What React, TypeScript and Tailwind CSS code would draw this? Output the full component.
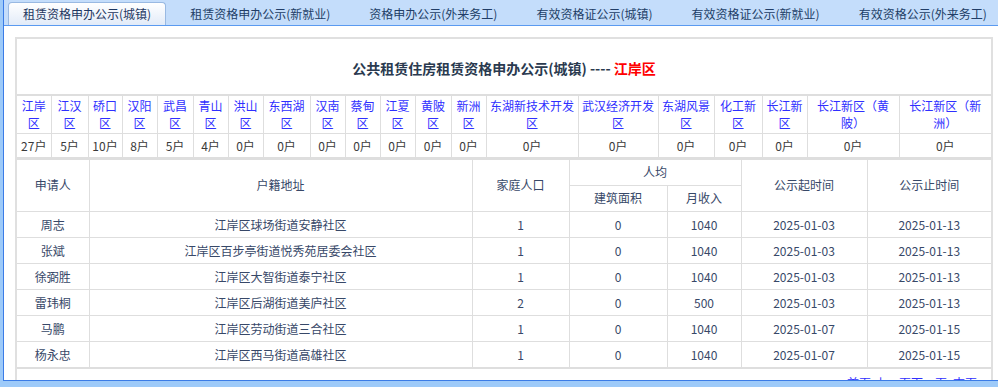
import React from "react";

const districts: [string, string][] = [
  ["江岸区", "27户"],
  ["江汉区", "5户"],
  ["硚口区", "10户"],
  ["汉阳区", "8户"],
  ["武昌区", "5户"],
  ["青山区", "4户"],
  ["洪山区", "0户"],
  ["东西湖区", "0户"],
  ["汉南区", "0户"],
  ["蔡甸区", "0户"],
  ["江夏区", "0户"],
  ["黄陂区", "0户"],
  ["新洲区", "0户"],
  ["东湖新技术开发区", "0户"],
  ["武汉经济开发区", "0户"],
  ["东湖风景区", "0户"],
  ["化工新区", "0户"],
  ["长江新区", "0户"],
  ["长江新区（黄陂）", "0户"],
  ["长江新区（新洲）", "0户"],
];
const dWidths = [34, 37, 34, 35, 36, 35, 35, 47, 35, 35, 35, 36, 35, 92, 80, 56, 48, 45, 92, 92];

const rows: string[][] = [
  ["周志", "江岸区球场街道安静社区", "1", "0", "1040", "2025-01-03", "2025-01-13"],
  ["张斌", "江岸区百步亭街道悦秀苑居委会社区", "1", "0", "1040", "2025-01-03", "2025-01-13"],
  ["徐弼胜", "江岸区大智街道泰宁社区", "1", "0", "1040", "2025-01-03", "2025-01-13"],
  ["雷玮桐", "江岸区后湖街道美庐社区", "2", "0", "500", "2025-01-03", "2025-01-13"],
  ["马鹏", "江岸区劳动街道三合社区", "1", "0", "1040", "2025-01-07", "2025-01-15"],
  ["杨永忠", "江岸区西马街道高雄社区", "1", "0", "1040", "2025-01-07", "2025-01-15"],
];
const rWidths = [72, 383, 97, 98, 74, 126, 124];

const tabs = [
  "租赁资格申办公示(城镇)",
  "租赁资格申办公示(新就业)",
  "资格申办公示(外来务工)",
  "有效资格证公示(城镇)",
  "有效资格证公示(新就业)",
  "有效资格公示(外来务工)",
];

export default function App() {
  return (
    <div className="w-[998px] h-[387px] overflow-hidden bg-[#9dcaf9] font-['Noto_Sans_CJK_SC',sans-serif] text-[12px]">
      <div className="ml-[3px] h-[381px] border-l border-b border-[#3b7ce6] bg-white flex flex-col overflow-hidden">
        <div className="h-[26px] shrink-0 bg-[#c4ddfb] border-b border-[#5a9af0] flex items-end gap-[9px] pl-[4px]">
          {tabs.map((t, i) =>
            i === 0 ? (
              <div
                key={t}
                className="h-[23px] px-[14px] border border-b-0 border-[#99b9e2] rounded-t-[4px] bg-linear-to-b from-white to-[#e2ebf8] flex items-center text-[#1d3660] leading-none whitespace-nowrap"
              >
                {t}
              </div>
            ) : (
              <div key={t} className="h-[23px] px-[15px] flex items-center text-[#213d66] leading-none whitespace-nowrap">
                {t}
              </div>
            )
          )}
        </div>
        <div className="pl-[11px] pt-[11px]">
          <div className="w-[978px] border-2 border-[#e0e0e0]">
            <div className="h-[55px] flex items-center justify-center pt-[3px] text-[14px] font-bold text-[#2a3a4f] whitespace-pre">
              公共租赁住房租赁资格申办公示(城镇) ----{" "}
              <span className="text-[#ff0000]">江岸区</span>
            </div>
            <div className="border-t-2 border-[#dedede]">
              <table className="w-full table-fixed border-collapse border-hidden">
                <colgroup>
                  {dWidths.map((w, i) => (
                    <col key={i} style={{ width: w }} />
                  ))}
                </colgroup>
                <tbody>
                  <tr>
                    {districts.map(([n]) => (
                      <td
                        key={n}
                        className="h-[37px] border border-[#dedede] px-[3px] leading-[17px] text-[#2f2fff] text-center align-middle"
                      >
                        {n}
                      </td>
                    ))}
                  </tr>
                  <tr>
                    {districts.map(([n, c]) => (
                      <td
                        key={n}
                        className="h-[24px] border border-[#dedede] px-[2px] leading-[17px] text-[#3a3a3a] text-center align-middle"
                      >
                        {c}
                      </td>
                    ))}
                  </tr>
                </tbody>
              </table>
            </div>
            <div className="border-t-[3px] border-b-2 border-[#dedede]">
              <table className="w-full table-fixed border-collapse border-hidden text-[#374868]">
                <colgroup>
                  {rWidths.map((w, i) => (
                    <col key={i} style={{ width: w }} />
                  ))}
                </colgroup>
                <thead>
                  <tr>
                    <th rowSpan={2} className="font-normal border border-[#dedede] text-center">申请人</th>
                    <th rowSpan={2} className="font-normal border border-[#dedede] text-center">户籍地址</th>
                    <th rowSpan={2} className="font-normal border border-[#dedede] text-center">家庭人口</th>
                    <th colSpan={2} className="h-[25px] font-normal border border-[#dedede] text-center">人均</th>
                    <th rowSpan={2} className="font-normal border border-[#dedede] text-center">公示起时间</th>
                    <th rowSpan={2} className="font-normal border border-[#dedede] text-center">公示止时间</th>
                  </tr>
                  <tr>
                    <th className="h-[26px] font-normal border border-[#dedede] text-center">建筑面积</th>
                    <th className="h-[26px] font-normal border border-[#dedede] text-center">月收入</th>
                  </tr>
                </thead>
                <tbody>
                  {rows.map((r) => (
                    <tr key={r[0]}>
                      {r.map((c, j) => (
                        <td key={j} className="h-[26px] border border-[#dedede] text-center leading-[17px] whitespace-nowrap">
                          {c}
                        </td>
                      ))}
                    </tr>
                  ))}
                </tbody>
              </table>
            </div>
            <div className="flex justify-end pr-[14px] pt-[5px] h-[60px] leading-[17px] text-[#2f2fff]">
              <span className="mr-[4px]">首页</span>
              <span>上一页</span>
              <span>下一页</span>
              <span className="ml-[6px]">末页</span>
            </div>
          </div>
        </div>
      </div>
    </div>
  );
}
